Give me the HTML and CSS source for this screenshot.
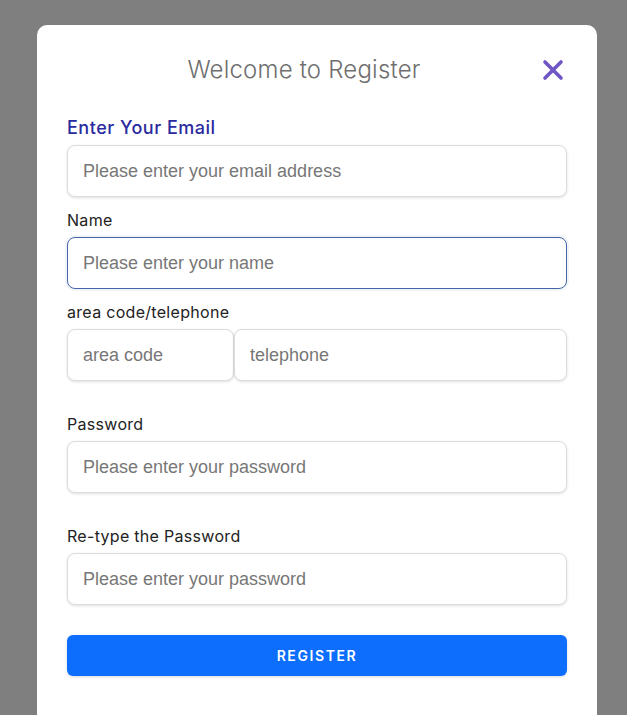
FILE: index.html
```html
<!DOCTYPE html>
<html lang="en">
<head>
<meta charset="utf-8">
<title>Register</title>
<link rel="stylesheet" href="styles.css">
</head>
<body>
<div class="modal">
  <div class="header">
    <h1 class="title">Welcome to Register</h1>
    <button class="close" aria-label="Close">
      <svg width="22" height="22" viewBox="0 0 22 22"><path d="M3 3L19 19M19 3L3 19" stroke="#6f56c4" stroke-width="3.6" stroke-linecap="round"/></svg>
    </button>
  </div>
  <form class="form">
    <div class="field gap-sm">
      <label class="label label-email">Enter Your Email</label>
      <input class="input" type="text" placeholder="Please enter your email address">
    </div>
    <div class="field gap-sm">
      <label class="label">Name</label>
      <input class="input input-focus" type="text" placeholder="Please enter your name">
    </div>
    <div class="field gap-lg">
      <label class="label">area code/telephone</label>
      <div class="phone-row">
        <input class="input input-area" type="text" placeholder="area code">
        <input class="input input-tel" type="text" placeholder="telephone">
      </div>
    </div>
    <div class="field gap-lg">
      <label class="label">Password</label>
      <input class="input" type="password" placeholder="Please enter your password">
    </div>
    <div class="field gap-btn">
      <label class="label">Re-type the Password</label>
      <input class="input" type="password" placeholder="Please enter your password">
    </div>
    <button type="button" class="register">REGISTER</button>
  </form>
</div>
</body>
</html>
```

FILE: styles.css
```css
html, body {
  margin: 0;
  padding: 0;
  background: #7f7f7f;
  height: 100%;
  overflow: hidden;
}
.modal {
  margin: 25px 0 0 37px;
  width: 560px;
  height: 720px;
  box-sizing: border-box;
  background: #fff;
  border-radius: 10px 10px 0 0;
  padding: 30px 30px 0 30px;
  font-family: Inter, "Noto Sans", sans-serif;
}
.header {
  height: 30px;
  display: flex;
  align-items: center;
}
.title {
  flex: 1;
  margin: 0;
  text-align: center;
  font-weight: 300;
  font-size: 24px;
  line-height: 30px;
  color: #6e6e6e;
  letter-spacing: 0.2px;
}
.close {
  flex: none;
  border: 0;
  background: none;
  padding: 0 3px 0 1px;
  width: 26px;
  height: 22px;
  display: flex;
  cursor: pointer;
}
.form {
  margin-top: 33px;
  display: flex;
  flex-direction: column;
}
.field {
  display: flex;
  flex-direction: column;
}
.gap-sm { margin-bottom: 13px; }
.gap-lg { margin-bottom: 33px; }
.gap-btn { margin-bottom: 30px; }
.label {
  font-size: 16px;
  line-height: 20px;
  letter-spacing: 0.3px;
  color: #222;
  margin-bottom: 7px;
}
.label-email {
  font-size: 18px;
  line-height: 22px;
  font-weight: 500;
  letter-spacing: 0.5px;
  color: #2a2a9e;
  margin-top: -1px;
  margin-bottom: 6px;
}
.input {
  box-sizing: border-box;
  width: 100%;
  height: 52px;
  border: 1px solid #dcdcdc;
  border-radius: 8px;
  padding: 0 15px;
  font-family: "Liberation Sans", Arial, sans-serif;
  font-size: 18px;
  color: #333;
  background: #fff;
  box-shadow: 0 1px 3px rgba(0, 0, 0, 0.12);
  outline: none;
}
.input::placeholder { color: #777; }
.input-focus {
  border-color: #4466a6;
  box-shadow: 0 0 0 2px rgba(68, 102, 166, 0.08);
}
.phone-row {
  display: flex;
}
.input-area { width: 167px; flex: none; }
.input-tel { flex: 1; }
.register {
  height: 41px;
  width: 100%;
  border: 0;
  border-radius: 6px;
  background: #0d6efd;
  color: #fff;
  font-family: Inter, "Noto Sans", sans-serif;
  font-size: 14px;
  font-weight: 600;
  letter-spacing: 1.6px;
  box-shadow: 0 1px 3px rgba(0, 0, 0, 0.15);
}
```
